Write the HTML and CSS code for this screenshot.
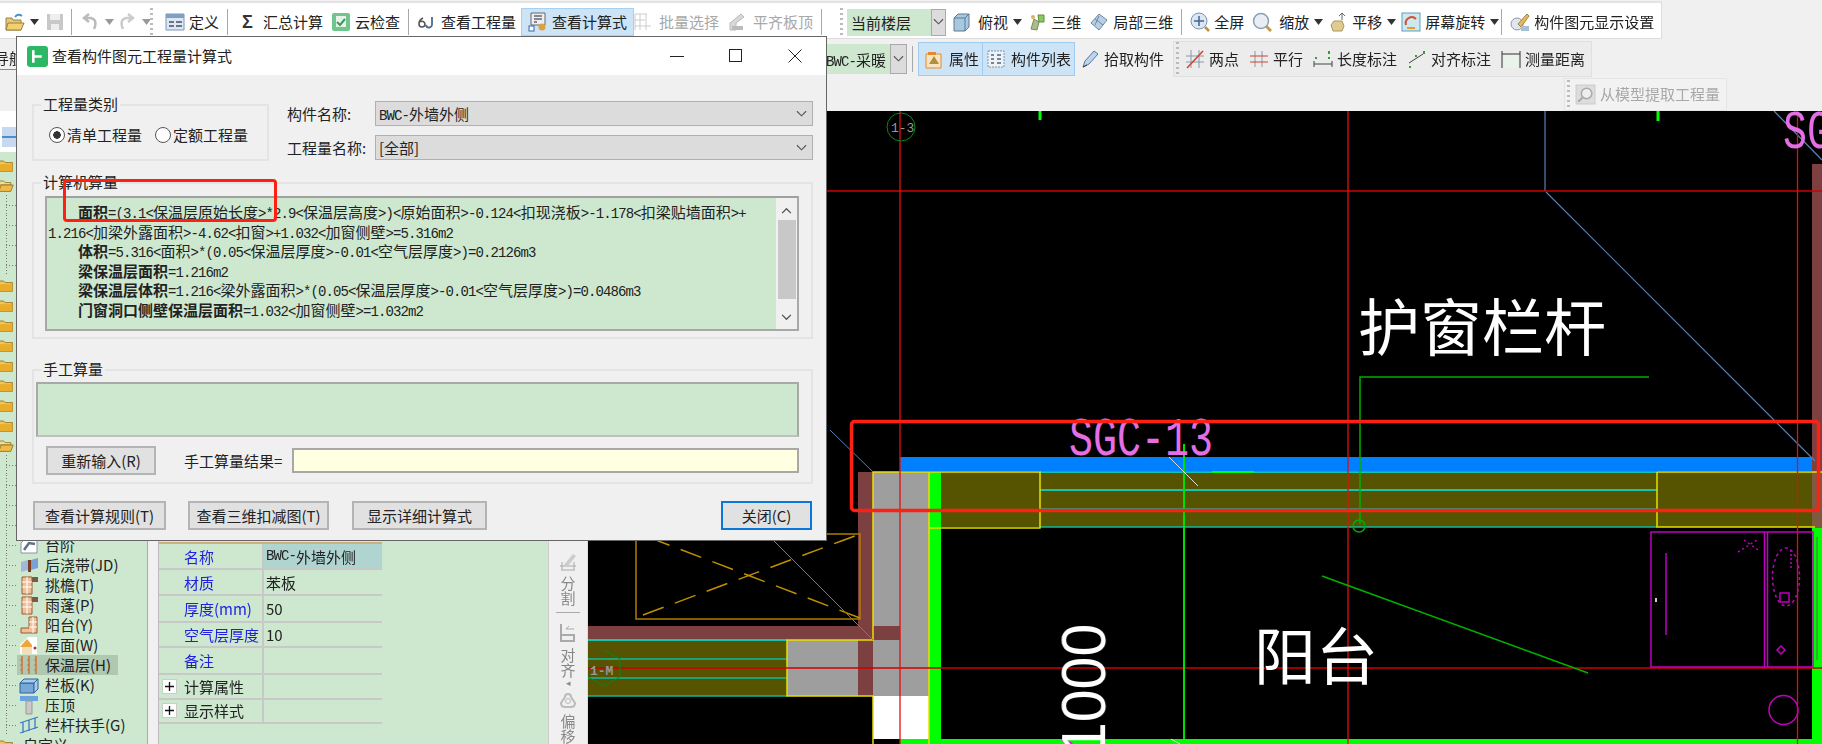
FILE: index.html
```html
<!DOCTYPE html>
<html lang="zh-CN">
<head>
<meta charset="utf-8">
<title>查看构件图元工程量计算式</title>
<link rel="stylesheet" href="styles.css">
</head>
<body>
<svg class="sprites" width="0" height="0" aria-hidden="true">
  <symbol id="i-folder" viewBox="0 0 20 20"><path d="M1 5h6l2 2h9v11H1z" fill="#f3c653" stroke="#8a6a1c"/><path d="M1 9h17v9H1z" fill="#e9ac2b"/></symbol>
  <symbol id="i-folder-open" viewBox="0 0 20 20"><path d="M1 5h6l2 2h7v3H1z" fill="#f6dc8f" stroke="#8a6a1c"/><path d="M4 10h15l-3 8H1z" fill="#efbb45" stroke="#8a6a1c"/></symbol>
  <symbol id="i-brick" viewBox="0 0 20 20"><path d="M3 2h10v17H3z" fill="#f0c09a" stroke="#9a5a30"/><path d="M3 7h10M3 12h10M8 2v17" stroke="#fff"/><path d="M13 2h6v5h-6z" fill="#7a5a40"/></symbol>
  <symbol id="i-arrow" viewBox="0 0 9 6"><path d="M0 0h9L4.500 6z" fill="#333"/></symbol>
  <symbol id="i-arrow-off" viewBox="0 0 9 6"><path d="M0 0h9L4.500 6z" fill="#999"/></symbol>
  <symbol id="i-chev" viewBox="0 0 12 8"><path d="M1 1l5 5 5-5" fill="none" stroke="#555" stroke-width="1.200"/></symbol>
  <symbol id="i-plus" viewBox="0 0 15 15"><rect x=".5" y=".5" width="14" height="14" fill="#fff" stroke="#ccc"/><path d="M3 7.500h9M7.500 3v9" stroke="#111" stroke-width="1.300"/></symbol>
</svg>

<div class="page">
  <header class="toolbars">
    <div class="bar bar-one">
      <span class="tool flush"><svg class="ico" viewBox="0 0 20 20"><path d="M1 6h6l1 2h8v10H1z" fill="#e6c878" stroke="#9a8040"/><path d="M3 11h16l-3 7H1z" fill="#f2d070" stroke="#9a8040"/><path d="M10 5q3-4 7-1" fill="none" stroke="#4a90c0" stroke-width="2"/></svg><svg class="caret" viewBox="0 0 9 6"><use href="#i-arrow"/></svg></span>
      <svg class="ico save" viewBox="0 0 20 20"><path d="M2 2h16v16H2z" fill="#c8c8c8"/><path d="M5 2h10v6H5z" fill="#eee"/><path d="M6 12h8v6H6z" fill="#eee"/></svg>
      <i class="sep"></i>
      <span class="tool flush off undo"><svg class="ico" viewBox="0 0 20 20"><path d="M14 17q4-9-3-11H6M9 2L4 6l5 4" fill="none" stroke="#bbb" stroke-width="2.500"/></svg><svg class="caret" viewBox="0 0 9 6"><use href="#i-arrow-off"/></svg></span>
      <span class="tool flush off redo"><svg class="ico" viewBox="0 0 20 20"><path d="M6 17q-4-9 3-11h5M11 2l5 4-5 4" fill="none" stroke="#ccc" stroke-width="2.500"/></svg><svg class="caret" viewBox="0 0 9 6"><use href="#i-arrow-off"/></svg></span>
      <i class="grip grip-a"></i>
      <span class="tool"><svg class="ico" viewBox="0 0 20 20"><path d="M1 2h18v16H1z" fill="#dfe8f2" stroke="#7c96b4"/><path d="M1 2h18v4H1z" fill="#7fa0c4"/><path d="M4 9h5v2H4zM11 9h6v2h-6zM4 13h5v2H4zM11 13h6v2h-6z" fill="#66778a"/></svg>定义</span>
      <i class="sep"></i>
      <span class="tool"><b class="sigma">Σ</b>汇总计算</span>
      <span class="tool"><svg class="ico" viewBox="0 0 20 20"><rect x="1" y="1" width="18" height="18" rx="2" fill="#6ec68c"/><path d="M5 4h10v11H5z" fill="#e8f4ea"/><path d="M6 10l3 3 5-6" fill="none" stroke="#3a9a5c" stroke-width="2"/></svg>云检查</span>
      <i class="sep"></i>
      <span class="tool"><svg class="ico" viewBox="0 0 20 20"><path d="M6 6q-4 2-4 6a3 3 0 006 0 3 3 0 00-5-2" fill="none" stroke="#555" stroke-width="1.600"/><path d="M15 5v7a3 3 0 01-6 1" fill="none" stroke="#4a6a90" stroke-width="1.800"/></svg>查看工程量</span>
      <span class="tool tool-on"><svg class="ico" viewBox="0 0 20 20"><path d="M3 1h14v12H3z" fill="#eee" stroke="#667"/><path d="M6 4h8M6 7h8M6 10h3" stroke="#667" stroke-width="1.500"/><rect x="1" y="14" width="5" height="5" fill="#fff" stroke="#3060b0"/><circle cx="14" cy="15" r="3.500" fill="#e0a040"/></svg>查看计算式</span>
      <span class="tool off"><svg class="ico" viewBox="0 0 20 20"><path d="M2 2v16M2 2h12M2 8h10M2 14h16M7 2v16M13 2v16" stroke="#ccc" fill="none"/></svg>批量选择</span>
      <span class="tool off"><svg class="ico" viewBox="0 0 20 20"><path d="M3 11l11-9 3 3-8 6v7H3z" fill="#d8d8d8" stroke="#bbb"/><path d="M5 14h11v4H5z" fill="#bbb"/></svg>平齐板顶</span>
      <i class="sep"></i>
      <i class="grip grip-b"></i>
      <span class="combo-floor">当前楼层<span class="combo-btn"><svg class="chev" viewBox="0 0 12 8"><use href="#i-chev"/></svg></span></span>
      <span class="tool tight"><svg class="ico ico-wide" viewBox="0 0 20 20"><path d="M3 6l4-4h11v13l-4 4H3z" fill="#a8c8e0" stroke="#5a7a94"/><path d="M3 6h11v13M14 6l4-4" fill="none" stroke="#5a7a94"/></svg>俯视</span>
      <svg class="caret after" viewBox="0 0 9 6"><use href="#i-arrow"/></svg>
      <span class="tool"><svg class="ico" viewBox="0 0 20 20"><path d="M4 17l3-10 5 3-2 8z" fill="#a8c088" stroke="#7a8a60"/><path d="M11 3h6v7h-5z" fill="#8cc860" stroke="#5a9030"/><circle cx="6" cy="5" r="2" fill="#d8b060"/></svg>三维</span>
      <span class="tool"><svg class="ico" viewBox="0 0 20 20"><path d="M2 11l8-9 8 6-8 10z" fill="#b8d0e4" stroke="#6a88a4"/><path d="M6 7l8 6M10 4l-4 9" stroke="#6a88a4" fill="none"/></svg>局部三维</span>
      <i class="sep"></i>
      <span class="tool"><svg class="ico" viewBox="0 0 20 20"><circle cx="9" cy="9" r="8" fill="#dbe6f2" stroke="#7a96b4"/><path d="M9 4v10M4 9h10" stroke="#44648a" stroke-width="1.500"/><path d="M15 15l4 4" stroke="#c09040" stroke-width="2.500"/></svg>全屏</span>
      <span class="tool tight"><svg class="ico" viewBox="0 0 20 20"><circle cx="9" cy="9" r="7.500" fill="#e8eef4" stroke="#8aa0b4" stroke-width="1.500"/><path d="M14 14l5 5" stroke="#c09a50" stroke-width="3"/></svg>缩放</span>
      <svg class="caret after" viewBox="0 0 9 6"><use href="#i-arrow"/></svg>
      <span class="tool tight g4"><svg class="ico" viewBox="0 0 20 20"><path d="M5 19l-2-6 3-4h8l2 5-2 5z" fill="#e0cc90" stroke="#a89860"/><path d="M14 1v7M11 4l3-3 3 3" fill="none" stroke="#666"/></svg>平移</span>
      <svg class="caret after" viewBox="0 0 9 6"><use href="#i-arrow"/></svg>
      <span class="tool tight g4"><svg class="ico" viewBox="0 0 20 20"><rect x="1" y="1" width="18" height="18" fill="#cfe8f0" stroke="#5aa0c0"/><path d="M5 13a6 6 0 0110-6" fill="none" stroke="#d05030" stroke-width="2"/><path d="M6 16h8" stroke="#e0a030" stroke-width="2"/></svg>屏幕旋转</span>
      <svg class="caret after" viewBox="0 0 9 6"><use href="#i-arrow"/></svg>
      <i class="sep sep-close"></i>
      <span class="tool"><svg class="ico" viewBox="0 0 20 20"><circle cx="7" cy="12" r="6" fill="#e0e6ec" stroke="#8a9aaa"/><path d="M8 12l9-10 2 2-8 11z" fill="#e8b860" stroke="#a08040"/><path d="M11 14h8v5h-8z" fill="#a8c0d4"/></svg>构件图元显示设置</span>
    </div>

    <div class="bar bar-two">
      <span class="nav-tab">导航</span>
      <span class="combo-part"><span class="combo-text"><span class="l">BWC-</span>采暖</span><span class="combo-btn"><svg class="chev" viewBox="0 0 12 8"><use href="#i-chev"/></svg></span></span>
      <i class="sep"></i>
      <span class="pair">
        <span class="tool tool-blue"><svg class="ico" viewBox="0 0 20 20"><path d="M2 5h15v14H2z" fill="#f8e4c0" stroke="#e08a30"/><path d="M5 15l5-8 5 8z" fill="#b09040"/><path d="M4 3h8v3H4z" fill="#e08a30"/></svg>属性</span>
        <span class="tool tool-blue"><svg class="ico" viewBox="0 0 20 20"><path d="M2 2h16v16H2z" fill="#eef3f8" stroke="#7f93a8" stroke-dasharray="2 1"/><path d="M5 6h3M5 10h3M5 14h3M11 6h4M11 10h4M11 14h4" stroke="#506478" stroke-width="1.500"/></svg>构件列表</span>
      </span>
      <span class="tool"><svg class="ico" viewBox="0 0 20 20"><path d="M3 18l2-6 9-10 4 3-9 10z" fill="#c0d4e8" stroke="#5078a4"/><path d="M3 18l4-2" stroke="#333"/></svg>拾取构件</span>
      <div class="measure">
        <i class="grip"></i>
        <span class="tool"><svg class="ico" viewBox="0 0 20 20"><path d="M6 1v18M14 1v18M1 7h18M1 13h18" stroke="#8a98a8"/><path d="M2 19L18 2" stroke="#d04030" stroke-width="1.500"/></svg>两点</span>
        <span class="tool"><svg class="ico" viewBox="0 0 20 20"><path d="M6 2v16M13 2v16" stroke="#8a98a8"/><path d="M1 7h18M1 13h18" stroke="#d04030"/></svg>平行</span>
        <span class="tool"><svg class="ico" viewBox="0 0 20 20"><path d="M1 15h18M1 12v6M19 12v6" stroke="#444" fill="none"/><path d="M3 8v2M16 2v3M16 8v2" stroke="#30a030" stroke-width="2"/></svg>长度标注</span>
        <span class="tool"><svg class="ico" viewBox="0 0 20 20"><path d="M2 14l14-9" stroke="#444" fill="none"/><path d="M3 17v2M17 2v3M9 6v2" stroke="#30a030" stroke-width="2"/></svg>对齐标注</span>
        <span class="tool"><svg class="ico" viewBox="0 0 20 20"><path d="M3 6h14v13H3z" fill="#eaf3ea"/><path d="M1 5h18M1 2v17M19 2v17" stroke="#333" fill="none"/></svg>测量距离</span>
      </div>
    </div>

    <div class="bar bar-three">
      <div class="extract"><i class="grip"></i><span class="tool off"><svg class="ico ico-big" viewBox="0 0 20 20"><rect x="1" y="1" width="18" height="18" fill="#ddd" stroke="#ccc"/><circle cx="11" cy="9" r="5" fill="#eee" stroke="#aaa" stroke-width="1.500"/><path d="M7 13l-4 4" stroke="#aaa" stroke-width="2"/></svg>从模型提取工程量</span></div>
    </div>
  </header>

  <main class="work">
    <aside class="tree">
      <div class="tree-head"><span class="tree-tabicon"><i></i></span></div>
      <ul class="tree-list">
        <li class="node"><svg class="fold"><use href="#i-folder"/></svg></li>
        <li class="node"><svg class="fold"><use href="#i-folder-open"/></svg></li>
        <li class="leaf"></li><li class="leaf"></li><li class="leaf"></li><li class="leaf"></li>
        <li class="node"><svg class="fold"><use href="#i-folder"/></svg></li>
        <li class="node"><svg class="fold"><use href="#i-folder"/></svg></li>
        <li class="node"><svg class="fold"><use href="#i-folder"/></svg></li>
        <li class="node"><svg class="fold"><use href="#i-folder"/></svg></li>
        <li class="node"><svg class="fold"><use href="#i-folder"/></svg></li>
        <li class="node"><svg class="fold"><use href="#i-folder"/></svg></li>
        <li class="node"><svg class="fold"><use href="#i-folder"/></svg></li>
        <li class="node"><svg class="fold"><use href="#i-folder"/></svg></li>
        <li class="node"><svg class="fold"><use href="#i-folder-open"/></svg></li>
        <li class="leaf"></li><li class="leaf"></li><li class="leaf"></li><li class="leaf"></li>
        <li class="leaf"><svg class="lic" viewBox="0 0 20 20"><path d="M2 18V8l6-6h10v16z" fill="#fff" stroke="#8a94a8"/><path d="M5 15l5-7 6 1" fill="none" stroke="#60708a" stroke-width="2.500"/></svg><span>台阶</span></li>
        <li class="leaf"><svg class="lic" viewBox="0 0 20 20"><path d="M2 7l7-2v10l-7 2z" fill="#a0b8dc"/><path d="M9 5h3v12H9z" fill="#7a4020"/><path d="M12 5l7-2v10l-7 2z" fill="#7aa0d8"/></svg><span>后浇带(JD)</span></li>
        <li class="leaf"><svg class="lic"><use href="#i-brick"/></svg><span>挑檐(T)</span></li>
        <li class="leaf"><svg class="lic"><use href="#i-brick"/></svg><span>雨蓬(P)</span></li>
        <li class="leaf"><svg class="lic" viewBox="0 0 20 20"><path d="M10 2h8v16H2v-5h8z" fill="#f0c09a" stroke="#9a5a30"/><path d="M10 7h8M10 12h8M14 2v16" stroke="#fff"/></svg><span>阳台(Y)</span></li>
        <li class="leaf"><svg class="lic" viewBox="0 0 20 20"><path d="M1 10l8-8h9v17H1z" fill="#fff"/><path d="M1 12l7-8 5 6v2z" fill="#eda63c"/><path d="M3 12h10v7H3z" fill="#f5deb5"/><circle cx="16" cy="13" r="1.500" fill="#a33"/></svg><span>屋面(W)</span></li>
        <li class="leaf selected"><svg class="lic" viewBox="0 0 20 20"><path d="M3 1v18M10 1v18M17 1v18" stroke="#d0703a" stroke-width="1.500"/><path d="M1 5h18M1 10h18M1 15h18" stroke="#d0703a" stroke-dasharray="2 5"/></svg><span>保温层(H)</span></li>
        <li class="leaf"><svg class="lic" viewBox="0 0 20 20"><path d="M1 8h14v10H1z" fill="#78a8d8" stroke="#30609a"/><path d="M1 8l4-4h14l-4 4zM15 8l4-4v10l-4 4z" fill="#a8cced" stroke="#30609a"/></svg><span>栏板(K)</span></li>
        <li class="leaf"><svg class="lic" viewBox="0 0 20 20"><path d="M1 1h18v5H1z" fill="#6aa4e0"/><path d="M7 6h6v13H7z" fill="#c8c8c8" stroke="#999"/></svg><span>压顶</span></li>
        <li class="leaf"><svg class="lic" viewBox="0 0 20 20"><path d="M1 8l18-6M1 18l18-6M4 7v11M10 5v11M16 3v11" stroke="#3a7ac8" fill="none" stroke-width="1.300"/></svg><span>栏杆扶手(G)</span></li>
        <li class="node custom"><svg class="fold"><use href="#i-folder"/></svg><span>自定义</span></li>
      </ul>
    </aside>

    <section class="props">
      <div class="prop-table">
        <div class="pn h26">名称</div><div class="pv cur"><span class="l">BWC-</span>外墙外侧</div>
        <div class="pn h26">材质</div><div class="pv">苯板</div>
        <div class="pn h27">厚度(mm)</div><div class="pv">50</div>
        <div class="pn h25">空气层厚度</div><div class="pv">10</div>
        <div class="pn h27">备注</div><div class="pv"></div>
        <div class="pn h24 group-row"><svg class="plus"><use href="#i-plus"/></svg>计算属性</div><div class="pv"></div>
        <div class="pn h24 group-row"><svg class="plus"><use href="#i-plus"/></svg>显示样式</div><div class="pv"></div>
      </div>
    </section>

    <nav class="strip">
      <svg class="sico" viewBox="0 0 20 20"><path d="M2 15h16M3 19h14M4 11v8M16 11v8" stroke="#aaa" fill="none"/><path d="M6 14l9-11 3 2-8 10z" fill="#ccc"/></svg>
      <span class="vtext">分割</span>
      <i class="vsep"></i>
      <svg class="sico" viewBox="0 0 20 20"><path d="M3 1v18M3 18h13v-6H3" stroke="#aaa" fill="none" stroke-width="2"/><path d="M8 6h8M8 6l3-3" stroke="#aaa" fill="none"/></svg>
      <span class="vtext">对齐</span>
      <span class="vmark">◂</span>
      <svg class="sico" viewBox="0 0 20 20"><path d="M7 8a3 3 0 016 0l4 6q0 4-4 4H7q-4 0-4-4z" fill="none" stroke="#bbb" stroke-width="2"/><circle cx="10" cy="12" r="2.500" fill="none" stroke="#bbb"/></svg>
      <span class="vtext">偏移</span>
    </nav>

    <svg class="canvas" viewBox="588 111 1234 633" width="1234" height="633">
      <rect x="588" y="111" width="1234" height="633" fill="#000"/>
      <rect x="900" y="457" width="915" height="14" fill="#0080ff"/>
      <rect x="941" y="472" width="881" height="55" fill="#565400"/>
      <rect x="588" y="640" width="199" height="56" fill="#565400"/>
      <rect x="1812" y="164" width="10" height="308" fill="#7d4040"/>
      <rect x="1812" y="472" width="10" height="56" fill="#7d5a40"/>
      <rect x="873" y="472" width="56" height="224" fill="#9e9e9e"/>
      <rect x="787" y="640" width="86" height="56" fill="#9e9e9e"/>
      <rect x="858" y="472" width="15" height="224" fill="#7d4040"/>
      <rect x="588" y="626" width="270" height="14" fill="#7d4040"/>
      <rect x="873" y="626" width="27" height="14" fill="#7d4040"/>
      <rect x="873" y="696" width="56" height="43" fill="#fff"/>
      <rect x="929" y="472" width="12" height="272" fill="#00ff00"/>
      <rect x="900" y="739" width="922" height="5" fill="#00ff00"/>
      <rect x="1812" y="528" width="10" height="216" fill="#00ff00"/>
      <g fill="none" stroke="#00e8e8" stroke-width="1.500">
        <path d="M1040 472H1657M1040 490H1657M588 640H787"/>
        <path d="M1040 509H1657M1040 527H1657M588 659H787M588 678H787M588 696H787" stroke="#10b8a0"/>
      </g>
      <g fill="none" stroke="#e8e000" stroke-width="1.500">
        <path d="M941 472H1040V528H929M873 472H941M1657 472H1822M1657 472V527H1815M873 472V640H787V696H873V744M929 472V744"/>
      </g>
      <path d="M636 541V619H860V534H827" fill="none" stroke="#b07c00" stroke-width="1.500"/>
      <path d="M643 615L860 534M860 618L640 534" stroke="#c09000" stroke-width="1.500" stroke-dasharray="22 12"/>
      <g fill="none" stroke="#5a80b0" stroke-width="1">
        <path d="M830 430L873 472M774 541L873 640"/>
        <path d="M1545 111V191M1546 192L1815 461M1774 111L1822 160" stroke-width="1.200"/>
      </g>
      <g stroke="#d00000" stroke-width="1.300">
        <path d="M827 191H1822M588 668H1822"/>
        <path d="M900 111V744M1348 111V744M1797.500 111V744" stroke="#e01010"/>
      </g>
      <path d="M1360 524V377H1649" fill="none" stroke="#00b000" stroke-width="1.500"/>
      <circle cx="1359" cy="526" r="6" fill="none" stroke="#00b000" stroke-width="1.500"/>
      <path d="M1184 444V739" stroke="#00e000" stroke-width="2"/>
      <path d="M1212 472H1254" stroke="#00ff00" stroke-width="2"/>
      <path d="M1040 111V120M1658 111V121" stroke="#00ff00" stroke-width="3"/>
      <path d="M1169 457L1198 486M1171 739L1180 744" stroke="#ddd"/>
      <path d="M1062 739L1072 744" stroke="#ff00ff" stroke-width="3"/>
      <path d="M1322 576L1588 673" stroke="#00b000" stroke-width="1.500"/>
      <circle cx="901" cy="127" r="14" fill="none" stroke="#008a20"/>
      <text class="t-small" x="891" y="132">1-3</text>
      <path d="M604 650L620 659V677L604 686L588 677" fill="none" stroke="#008a20"/>
      <text class="t-small t-gray" x="590" y="675">1-M</text>
      <text class="t-pink" transform="translate(1069 455) scale(1 1.350)">SGC-13</text>
      <text class="t-pink" transform="translate(1783 148) scale(1 1.350)">SG</text>
      <text class="t-cad" x="1358" y="351">护窗栏杆</text>
      <text class="t-cad" x="1254" y="680">阳台</text>
      <text class="t-dim" transform="translate(1105 755) rotate(-90) scale(1 1.070)">1000</text>
      <g fill="none" stroke="#c000c0" stroke-width="1.500">
        <path d="M1651 532H1813V667H1651zM1764.500 532V667M1767.500 532V667M1666 553V635"/>
        <ellipse cx="1786" cy="577" rx="13.500" ry="29" stroke-dasharray="3 3"/>
        <rect x="1780" y="593" width="9" height="9"/>
        <path d="M1781 646L1785 650L1781 654L1777 650Z"/>
        <circle cx="1783.500" cy="710" r="14.500"/>
        <path d="M1791 550V570" stroke-dasharray="2 2"/>
        <path d="M1738 552L1757 540M1744 540L1758 550" stroke-dasharray="2 3"/>
        <path d="M1817 537V660" stroke="#606060" stroke-width="1"/>
      </g>
      <path d="M1656 598V602" stroke="#ccc" stroke-width="2"/>
      <rect x="851.500" y="421.500" width="967" height="89" rx="3" fill="none" stroke="#ff2014" stroke-width="3.500"/>
    </svg>
  </main>

  <div class="dialog">
    <div class="titlebar">
      <svg class="appicon" viewBox="0 0 20 20"><rect width="20" height="20" rx="3" fill="#2bb763"/><path d="M6 4v12M6 10h8" stroke="#fff" stroke-width="2.500" fill="none"/></svg>
      <span class="title">查看构件图元工程量计算式</span>
      <span class="winbtns">
        <svg viewBox="0 0 14 14"><path d="M0 7.500h14" stroke="#222"/></svg>
        <svg viewBox="0 0 14 14"><rect x=".5" y=".5" width="12" height="12" fill="none" stroke="#222"/></svg>
        <svg viewBox="0 0 14 14"><path d="M.5.5l13 13M13.500.5l-13 13" stroke="#222"/></svg>
      </span>
    </div>
    <div class="dlg-body">
      <div class="dlg-top">
        <div class="group g-kind">
          <span class="legend">工程量类别</span>
          <label class="radio on"><i></i>清单工程量</label>
          <label class="radio"><i></i>定额工程量</label>
        </div>
        <div class="fields">
          <div class="field"><span class="flabel">构件名称:</span><span class="select"><span><span class="l">BWC-</span>外墙外侧</span><svg class="chev" viewBox="0 0 12 8"><use href="#i-chev"/></svg></span></div>
          <div class="field"><span class="flabel">工程量名称:</span><span class="select"><span>[全部]</span><svg class="chev" viewBox="0 0 12 8"><use href="#i-chev"/></svg></span></div>
        </div>
      </div>

      <div class="group g-auto">
        <span class="legend">计算机算量</span>
        <div class="formula">
          <div class="formula-text">
            <p><b>面积</b><span class="l">=(3.1&lt;</span>保温层原始长度<span class="l">&gt;*2.9&lt;</span>保温层高度<span class="l">&gt;)&lt;</span>原始面积<span class="l">&gt;-0.124&lt;</span>扣现浇板<span class="l">&gt;-1.178&lt;</span>扣梁贴墙面积<span class="l">&gt;+</span><br><span class="l">1.216&lt;</span>加梁外露面积<span class="l">&gt;-4.62&lt;</span>扣窗<span class="l">&gt;+1.032&lt;</span>加窗侧壁<span class="l">&gt;=5.316m2</span></p>
            <p><b>体积</b><span class="l">=5.316&lt;</span>面积<span class="l">&gt;*(0.05&lt;</span>保温层厚度<span class="l">&gt;-0.01&lt;</span>空气层厚度<span class="l">&gt;)=0.2126m3</span></p>
            <p><b>梁保温层面积</b><span class="l">=1.216m2</span></p>
            <p><b>梁保温层体积</b><span class="l">=1.216&lt;</span>梁外露面积<span class="l">&gt;*(0.05&lt;</span>保温层厚度<span class="l">&gt;-0.01&lt;</span>空气层厚度<span class="l">&gt;)=0.0486m3</span></p>
            <p><b>门窗洞口侧壁保温层面积</b><span class="l">=1.032&lt;</span>加窗侧壁<span class="l">&gt;=1.032m2</span></p>
          </div>
          <div class="scroll">
            <svg class="sarrow" viewBox="0 0 12 8"><path d="M1 7l5-5 5 5" fill="none" stroke="#555" stroke-width="1.500"/></svg>
            <i class="thumb"></i>
            <svg class="sarrow" viewBox="0 0 12 8"><path d="M1 1l5 5 5-5" fill="none" stroke="#555" stroke-width="1.500"/></svg>
          </div>
        </div>
      </div>

      <div class="group g-manual">
        <span class="legend">手工算量</span>
        <div class="manual-area"></div>
        <div class="manual-row">
          <span class="btn b-redo">重新输入(R)</span>
          <span class="mlabel">手工算量结果=</span>
          <span class="result"></span>
        </div>
      </div>

      <div class="actions">
        <span class="btn b-rule">查看计算规则(T)</span>
        <span class="btn b-3d">查看三维扣减图(T)</span>
        <span class="btn b-detail">显示详细计算式</span>
        <span class="btn b-close">关闭(C)</span>
      </div>
    </div>
    <i class="redmark"></i>
  </div>
</div>
</body>
</html>
```

FILE: styles.css
```css
* { box-sizing: border-box; }
html, body { margin: 0; padding: 0; }
body {
  width: 1822px;
  height: 744px;
  overflow: hidden;
  background: #f0f0f0;
  font-family: "Noto Sans CJK SC", "Liberation Sans", sans-serif;
  font-size: 15px;
  color: #222;
}
.sprites { position: absolute; }
.page { position: relative; width: 1822px; height: 744px; filter: blur(.35px); }

/* half-width Latin, as in the program's bitmap font */
.l { font-family: "Liberation Mono", monospace; font-size: 14px; letter-spacing: -.9px; line-height: 0; }

/* toolbars */
.toolbars { height: 111px; display: flex; flex-direction: column; }
.bar { display: flex; align-items: center; white-space: nowrap; }
.bar-one {
  height: 38px;
  width: 1662px;
  padding: 3px 0 0 5px;
  gap: 8px;
  background: #fff;
  border-top: 2px solid #e4e4e4;
  border-right: 1px solid #ddd;
  border-bottom: 1px solid #ddd;
  margin-top: 1px;
}
.bar-two { height: 38px; padding-top: 2px; gap: 5px; }
.bar-three { height: 34px; justify-content: flex-start; }
.tool { display: inline-flex; align-items: center; gap: 4px; line-height: 20px; height: 28px; }
.tool.flush { gap: 5px; }
.tool.tight { margin-right: -3px; gap: 7px; }
.tool.tight.g4 { gap: 4px; }
.off { color: #a8a8a8; gap: 6px; }
.ico { width: 20px; height: 20px; flex: none; }
.ico-big { width: 21px; height: 21px; }
.save { margin-left: -2px; margin-right: -2px; }
.undo { margin-right: -5px; }
.redo { margin-right: -9px; }
.caret { width: 9px; height: 6px; flex: none; }
.caret.after { margin-right: -3px; }
.sep { width: 1px; height: 26px; background: #a8a8a8; flex: none; }
.sep-close { margin-left: -3px; }
.grip {
  width: 3px;
  height: 28px;
  flex: none;
  background: repeating-linear-gradient(to bottom, #bbb 0 2px, transparent 2px 5px);
}
.grip-a { margin-right: 4px; }
.grip-b { margin-left: 10px; margin-right: -4px; }
.sigma { width: 23px; font-size: 18px; font-weight: 700; color: #333; text-align: center; font-family: "Liberation Sans", sans-serif; }
.tool-on {
  height: 28px;
  padding: 0 6px;
  margin: 0 -9px 0 -3px;
  background: #cde4f7;
  border: 1px solid #a8d0f2;
}
.combo-floor {
  width: 99px;
  height: 27px;
  padding-left: 4px;
  display: flex;
  align-items: center;
  justify-content: space-between;
  background: #cde8cf;
  margin-right: -3px;
}
.combo-btn {
  width: 15px;
  height: 100%;
  display: flex;
  align-items: center;
  justify-content: center;
  background: #dcdcdc;
  border: 1px solid #aaa;
  flex: none;
}
.chev { width: 11px; height: 8px; flex: none; }
.nav-tab {
  width: 40px;
  height: 22px;
  line-height: 20px;
  margin-left: -16px;
  text-align: right;
  border-bottom: 1px solid #888;
}
.combo-part {
  margin-left: 771px;
  width: 107px;
  height: 30px;
  display: flex;
  align-items: center;
  padding-left: 26px;
  background: #cde8cf;
  overflow: hidden;
}
.combo-text { flex: 1; min-width: 0; overflow: hidden; }
.combo-part .combo-btn { width: 17px; }
.pair { display: flex; height: 34px; }
.tool-blue {
  height: 34px;
  padding: 0 3px 0 5px;
  background: #cde4f7;
  border: 1px solid #a0ccf2;
  gap: 5px;
}
.tool-blue + .tool-blue { padding: 0 3px; margin-left: -1px; }
.measure {
  margin-left: 4px;
  display: flex;
  align-items: center;
  gap: 10px;
  height: 36px;
  width: 419px;
  padding-left: 2px;
  background: #ececec;
  border: 1px solid #e0e0e0;
}
.measure .grip { margin-right: -4px; height: 34px; }
.extract {
  margin-left: 1564px;
  width: 163px;
  height: 33px;
  display: flex;
  align-items: center;
  gap: 5px;
  padding-left: 2px;
  background: #f2f2f2;
  border: 1px solid #e4e4e4;
}
.extract .tool { gap: 4px; }

/* work area */
.work { height: 633px; display: flex; }
.tree { width: 148px; flex: none; background: #cde8cf; border-right: 1px solid #aaa; overflow: hidden; position: relative; }
.tree-head { height: 41px; background: #fff; padding: 16px 2px 0; }
.tree-tabicon { display: block; width: 14px; height: 20px; background: #c8d8f0; padding-top: 9px; }
.tree-tabicon i { display: block; height: 2px; background: #4a90c8; }
.tree-list { list-style: none; margin: 0; padding: 3px 0 0; }
.node, .leaf { height: 20px; display: flex; align-items: center; line-height: 20px; position: relative; }
.fold { width: 16px; height: 20px; flex: none; margin-left: -2px; }
.custom span { margin-left: 9px; }
.leaf { padding-left: 19px; }
.leaf::before {
  content: "";
  position: absolute;
  left: 6px;
  top: 0;
  bottom: 0;
  width: 12px;
  background:
    repeating-linear-gradient(to right, #777 0 1px, transparent 1px 3px) 0 10px / 100% 1px no-repeat,
    repeating-linear-gradient(to bottom, #777 0 1px, transparent 1px 3px) 0 0 / 1px 100% no-repeat;
}
.lic { width: 20px; height: 20px; flex: none; position: relative; }
.leaf span { margin-left: 6px; position: relative; }
.leaf.selected { background: linear-gradient(#b0c8b0, #b0c8b0) 17px 0 / 101px 100% no-repeat; }

.props { width: 391px; margin-left: 10px; flex: none; background: #cde8cf; border-left: 1px solid #bbb; border-right: 1px solid #ccc; padding-top: 431px; }
.prop-table {
  width: 223px;
  display: grid;
  grid-template-columns: 105px 118px;
  border-top: 2px solid #d0b080;
}
.pn, .pv { border-bottom: 2px solid #c8c8c8; display: flex; align-items: center; }
.pn { color: #2020e0; padding-left: 25px; border-right: 2px solid #c8c8c8; white-space: nowrap; }
.pv { padding-left: 2px; white-space: pre; }
.pv.cur { background: #b0d5d0; }
.h26 { height: 26px; }
.h27 { height: 27px; }
.h25 { height: 25px; }
.h24 { height: 24.500px; }
.group-row { color: #222; padding-left: 3px; gap: 7px; }
.plus { width: 15px; height: 15px; flex: none; }

.strip { width: 39px; flex: none; padding-top: 440px; display: flex; flex-direction: column; align-items: center; background: #f0f0f0; border-right: 1px solid #ddd; color: #888; }
.sico { width: 20px; height: 20px; flex: none; }
.vtext { width: 16px; line-height: 15px; font-size: 15px; margin-top: 4px; text-align: center; }
.vsep { width: 24px; height: 1px; background: #aaa; margin: 7px 0 10px; flex: none; }
.vmark { font-size: 9px; line-height: 12px; }

.canvas { display: block; flex: none; }
.t-small { font: 13px "Liberation Mono", monospace; fill: #999; }
.t-gray { font-weight: 700; }
.t-pink { font: 40px "Liberation Mono", monospace; fill: #e46ee4; }
.t-cad { font: 62px/1 "Noto Sans CJK SC", sans-serif; fill: #fff; }
.t-dim { font: 59px "Liberation Sans", sans-serif; fill: #fff; }

/* dialog */
.dialog {
  position: absolute;
  left: 16px;
  top: 36px;
  width: 811px;
  height: 505px;
  background: #f0f0f0;
  border: 1px solid #666;
}
.titlebar { height: 38px; background: #fff; display: flex; align-items: center; padding-left: 10px; }
.appicon { width: 21px; height: 21px; flex: none; }
.title { margin-left: 4px; line-height: 20px; }
.winbtns { margin-left: auto; display: flex; gap: 45px; padding-right: 24px; }
.winbtns svg { width: 14px; height: 14px; }
.dlg-body { padding: 26px 13px 0 15px; }
.dlg-top { display: flex; height: 60px; }
.group { position: relative; border: 2px solid #e4e4e4; }
.legend { position: absolute; left: 7px; top: -11px; line-height: 18px; background: #f0f0f0; padding: 0 2px; }
.g-kind { width: 237px; height: 57px; margin-top: 3px; display: flex; align-items: center; padding: 4px 0 0 15px; gap: 13px; }
.radio { display: flex; align-items: center; gap: 2px; white-space: nowrap; line-height: 20px; }
.radio i { width: 16px; height: 16px; border-radius: 50%; border: 1px solid #555; background: #fff; flex: none; }
.radio.on i { background: radial-gradient(circle, #333 0 3.500px, #fff 4px); }
.fields { margin-left: 18px; flex: 1; display: flex; flex-direction: column; gap: 9px; }
.field { display: flex; align-items: center; height: 25px; }
.flabel { width: 88px; flex: none; white-space: nowrap; }
.select {
  flex: 1;
  height: 25px;
  display: flex;
  align-items: center;
  justify-content: space-between;
  padding: 0 5px 0 3px;
  background: #dcdcdc;
  border: 1px solid #b0b0b0;
}
.g-auto { height: 157px; margin-top: 21px; padding: 12px 12px 0 11px; }
.formula { height: 135px; display: flex; background: #cde8cf; border: 2px solid #a8a8a8; border-top-color: #a0a0a0; }
.formula-text { flex: 1; padding: 4px 0 0 1px; line-height: 19.600px; white-space: nowrap; overflow: hidden; }
.formula-text p { margin: 0; text-indent: 30px; }
.scroll { width: 21px; flex: none; background: #f0f0f0; display: flex; flex-direction: column; align-items: center; padding-top: 9px; }
.sarrow { width: 11px; height: 7px; flex: none; }
.thumb { width: 18px; height: 79px; background: #c8c8c8; margin: 6px 0 15px; flex: none; }
.g-manual { height: 115px; margin-top: 30px; padding: 11px 12px 0 2px; }
.manual-area { height: 55px; background: #cde8cf; border: 2px solid #a8a8a8; border-bottom-color: #c0c0c0; }
.manual-row { display: flex; align-items: center; height: 29px; margin-top: 9px; padding-left: 10px; }
.btn { display: flex; align-items: center; justify-content: center; height: 29px; background: #e1e1e1; border: 2px solid #b4b4b4; white-space: nowrap; flex: none; }
.b-redo { width: 110px; }
.mlabel { margin-left: 28px; width: 108px; white-space: nowrap; }
.result { flex: 1; height: 25px; background: #ffffe2; border: 2px solid #a8a8a8; }
.actions { display: flex; margin-top: 17px; padding: 0 1px; }
.b-rule { width: 133px; }
.b-3d { width: 141px; margin-left: 22px; }
.b-detail { width: 135px; margin-left: 23px; }
.b-close { width: 91px; margin-left: auto; border-color: #0a78d8; }
.redmark {
  position: absolute;
  left: 46px;
  top: 142px;
  width: 214px;
  height: 43px;
  border: 3.500px solid #ff2014;
  border-radius: 4px;
}
```
